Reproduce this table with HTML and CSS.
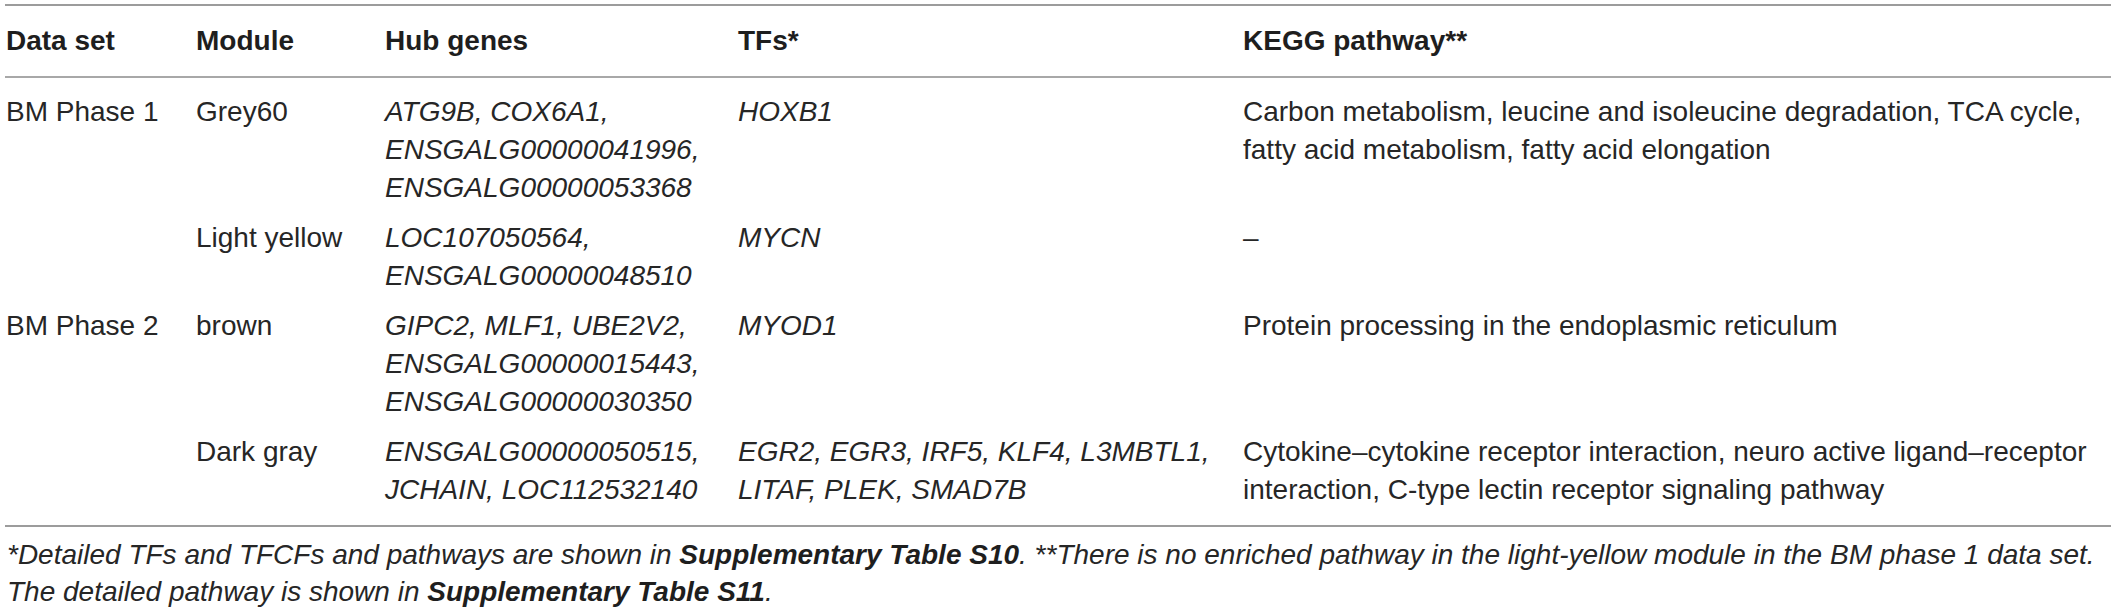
FILE: index.html
```html
<!DOCTYPE html>
<html lang="en">
<head>
<meta charset="utf-8">
<title>Table</title>
<link rel="stylesheet" href="styles.css">
</head>
<body>
<div class="wrap">
<table class="data">
  <colgroup>
    <col class="c1"><col class="c2"><col class="c3"><col class="c4"><col class="c5">
  </colgroup>
  <thead>
    <tr>
      <th>Data set</th>
      <th>Module</th>
      <th>Hub genes</th>
      <th>TFs*</th>
      <th>KEGG pathway**</th>
    </tr>
  </thead>
  <tbody>
    <tr class="first">
      <td>BM Phase 1</td>
      <td>Grey60</td>
      <td class="gene">ATG9B, COX6A1,<br>ENSGALG00000041996,<br>ENSGALG00000053368</td>
      <td class="gene">HOXB1</td>
      <td>Carbon metabolism, leucine and isoleucine degradation, TCA cycle,<br>fatty acid metabolism, fatty acid elongation</td>
    </tr>
    <tr>
      <td></td>
      <td>Light yellow</td>
      <td class="gene">LOC107050564,<br>ENSGALG00000048510</td>
      <td class="gene">MYCN</td>
      <td>–</td>
    </tr>
    <tr>
      <td>BM Phase 2</td>
      <td>brown</td>
      <td class="gene">GIPC2, MLF1, UBE2V2,<br>ENSGALG00000015443,<br>ENSGALG00000030350</td>
      <td class="gene">MYOD1</td>
      <td>Protein processing in the endoplasmic reticulum</td>
    </tr>
    <tr class="last">
      <td></td>
      <td>Dark gray</td>
      <td class="gene">ENSGALG00000050515,<br>JCHAIN, LOC112532140</td>
      <td class="gene">EGR2, EGR3, IRF5, KLF4, L3MBTL1,<br>LITAF, PLEK, SMAD7B</td>
      <td>Cytokine–cytokine receptor interaction, neuro active ligand–receptor<br>interaction, C-type lectin receptor signaling pathway</td>
    </tr>
  </tbody>
</table>
<p class="foot">*Detailed TFs and TFCFs and pathways are shown in <b>Supplementary Table S10</b>. **There is no enriched pathway in the light-yellow module in the BM phase 1 data set.<br>The detailed pathway is shown in <b>Supplementary Table S11</b>.</p>
</div>
</body>
</html>
```

FILE: styles.css
```css
html, body {
  margin: 0;
  padding: 0;
  background: #ffffff;
}

body {
  font-family: "Liberation Sans", Arial, sans-serif;
  color: #262626;
}

.wrap {
  padding: 4px 6px 0 5px;
  width: 2106px;
}

.data {
  width: 2106px;
  border-collapse: collapse;
  table-layout: fixed;
  font-size: 28px;
  line-height: 38px;
}

.c1 { width: 190px; }
.c2 { width: 189px; }
.c3 { width: 353px; }
.c4 { width: 505px; }
.c5 { width: auto; }

.data thead tr {
  border-top: 2px solid #9c9c9c;
  border-bottom: 2px solid #a8a8a8;
}

.data th {
  text-align: left;
  font-weight: bold;
  font-size: 28px;
  color: #1e1e1e;
  padding: 16px 0 16px 1px;
  vertical-align: top;
}

.data td {
  text-align: left;
  vertical-align: top;
  padding: 6px 0 6px 1px;
  font-weight: normal;
}

.data tr.first td {
  padding-top: 15px;
}

.data tr.last td {
  padding-bottom: 16px;
}

.data tbody tr.last {
  border-bottom: 2px solid #9c9c9c;
}

.gene {
  font-style: italic;
}

.foot {
  margin: 0;
  padding: 9px 0 0 2px;
  font-size: 28px;
  line-height: 37px;
  font-style: italic;
  white-space: nowrap;
}

.foot b {
  font-weight: bold;
  color: #1e1e1e;
}
```
